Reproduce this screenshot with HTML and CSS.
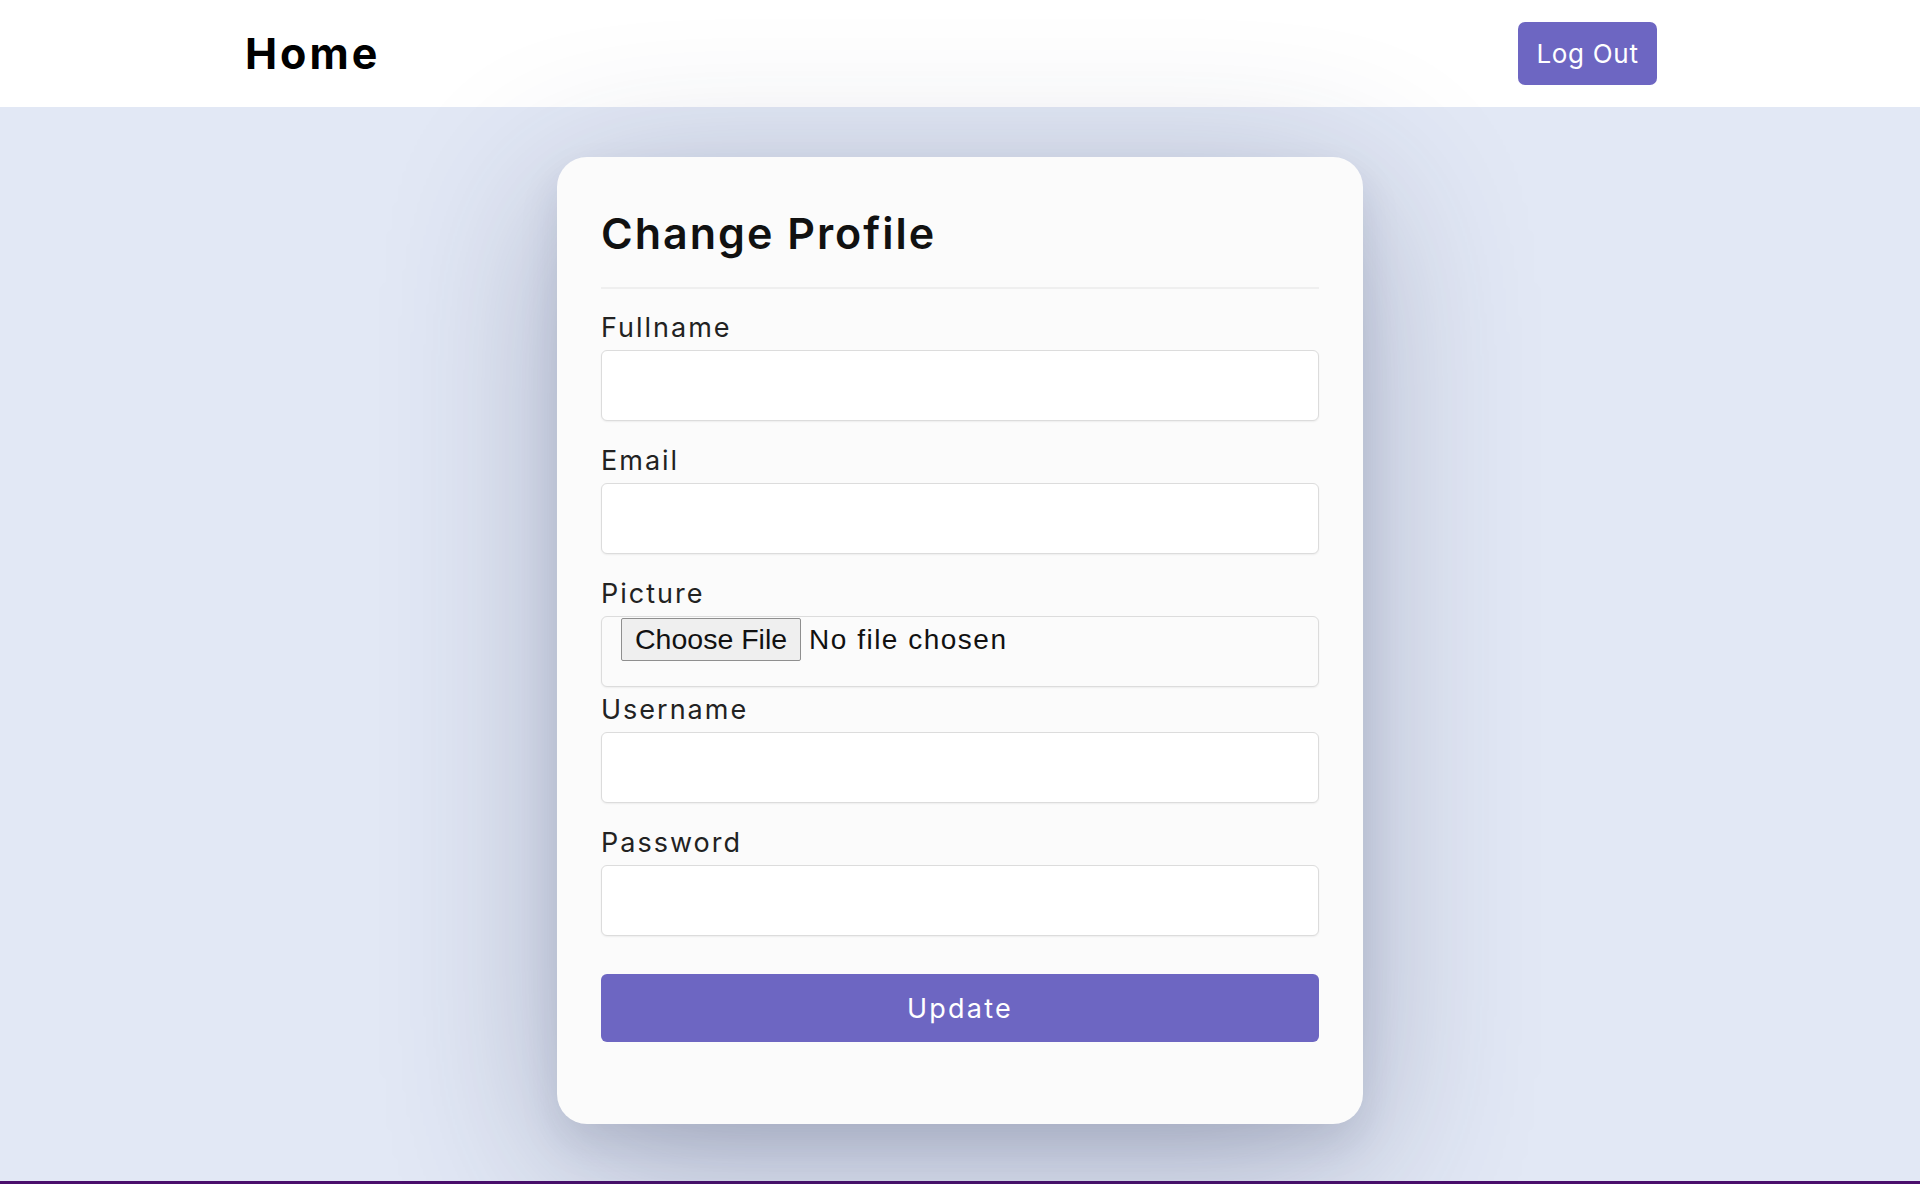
FILE: index.html
```html
<!DOCTYPE html>
<html lang="en">
<head>
<meta charset="utf-8">
<title>Change Profile</title>
<link rel="stylesheet" href="styles.css">
</head>
<body>
<div class="page">
  <header class="topbar">
    <a class="brand" href="#">Home</a>
    <button class="btn btn-logout" type="button">Log Out</button>
  </header>
  <main class="main">
    <form class="card">
      <h1 class="card-title">Change Profile</h1>
      <hr class="divider">
      <div class="field">
        <label class="label" for="fullname">Fullname</label>
        <input class="input" id="fullname" type="text">
      </div>
      <div class="field">
        <label class="label" for="email">Email</label>
        <input class="input" id="email" type="email">
      </div>
      <div class="field field-file">
        <label class="label" for="picture">Picture</label>
        <input class="input input-file" id="picture" type="file">
      </div>
      <div class="field">
        <label class="label" for="username">Username</label>
        <input class="input" id="username" type="text">
      </div>
      <div class="field">
        <label class="label" for="password">Password</label>
        <input class="input" id="password" type="password">
      </div>
      <button class="btn btn-submit" type="button">Update</button>
    </form>
  </main>
</div>
</body>
</html>
```
FILE: styles.css
```css
html, body {
  margin: 0;
  padding: 0;
}

body {
  background: #e2e8f5;
  font-family: "Inter", "Noto Sans", sans-serif;
  color: #1e1e1e;
}

.page {
  min-height: 100vh;
  box-sizing: border-box;
  border-bottom: 3px solid #4a0e6c;
  display: flex;
  flex-direction: column;
}

.topbar {
  height: 107px;
  background: #ffffff;
  display: flex;
  align-items: center;
  justify-content: space-between;
  padding: 0 263px 0 245px;
  box-sizing: border-box;
}

.brand {
  font-size: 43px;
  font-weight: 700;
  color: #000;
  text-decoration: none;
  letter-spacing: 3px;
  line-height: 1;
}

.btn {
  border: none;
  cursor: pointer;
  font-family: "Inter", "Noto Sans", sans-serif;
  color: #ffffff;
  background: #6d66c2;
}

.btn-logout {
  width: 139px;
  height: 63px;
  border-radius: 7px;
  font-size: 26px;
  font-weight: 400;
  letter-spacing: 0.7px;
  padding: 0;
}

.main {
  display: flex;
  justify-content: center;
  padding-top: 50px;
}

.card {
  width: 806px;
  box-sizing: border-box;
  background: #fbfbfb;
  border-radius: 30px;
  padding: 50px 44px 82px;
  box-shadow: 0 40px 170px rgba(40, 45, 90, 0.30), 0 20px 40px rgba(20, 25, 60, 0.10);
}

.card-title {
  margin: 0;
  font-size: 43px;
  font-weight: 600;
  line-height: 52px;
  color: #111;
  letter-spacing: 2px;
}

.divider {
  margin: 28px 0 21px;
  border: none;
  height: 2px;
  background: #efefef;
}

.field {
  display: flex;
  flex-direction: column;
  margin-bottom: 22px;
}

.field-file {
  margin-bottom: 5px;
}

.label {
  font-size: 27px;
  line-height: 36px;
  margin-bottom: 4px;
  color: #222;
  letter-spacing: 2px;
}

.input {
  height: 71px;
  box-sizing: border-box;
  border: 1px solid #dcdcdc;
  border-radius: 6px;
  background: #ffffff;
  box-shadow: 0 1px 2px rgba(0, 0, 0, 0.06);
  font-size: 24px;
  padding: 0 16px;
}

.input-file {
  background: #fbfbfb;
  padding: 1px 19px;
  font-family: "Liberation Sans", Arial, sans-serif;
  font-size: 28px;
  letter-spacing: 1.5px;
  line-height: 43px;
  color: #111;
}

.input-file::file-selector-button {
  font-family: "Liberation Sans", Arial, sans-serif;
  font-size: 28.5px;
  letter-spacing: 0;
  height: 43px;
  padding: 0 13px;
  margin: 0 8px 0 0;
  border: 1px solid #8f8f8f;
  border-radius: 2px;
  background: #efefef;
  color: #111;
}

.btn-submit {
  margin-top: 16px;
  width: 100%;
  height: 68px;
  border-radius: 6px;
  font-size: 27px;
  letter-spacing: 2.2px;
}
```
